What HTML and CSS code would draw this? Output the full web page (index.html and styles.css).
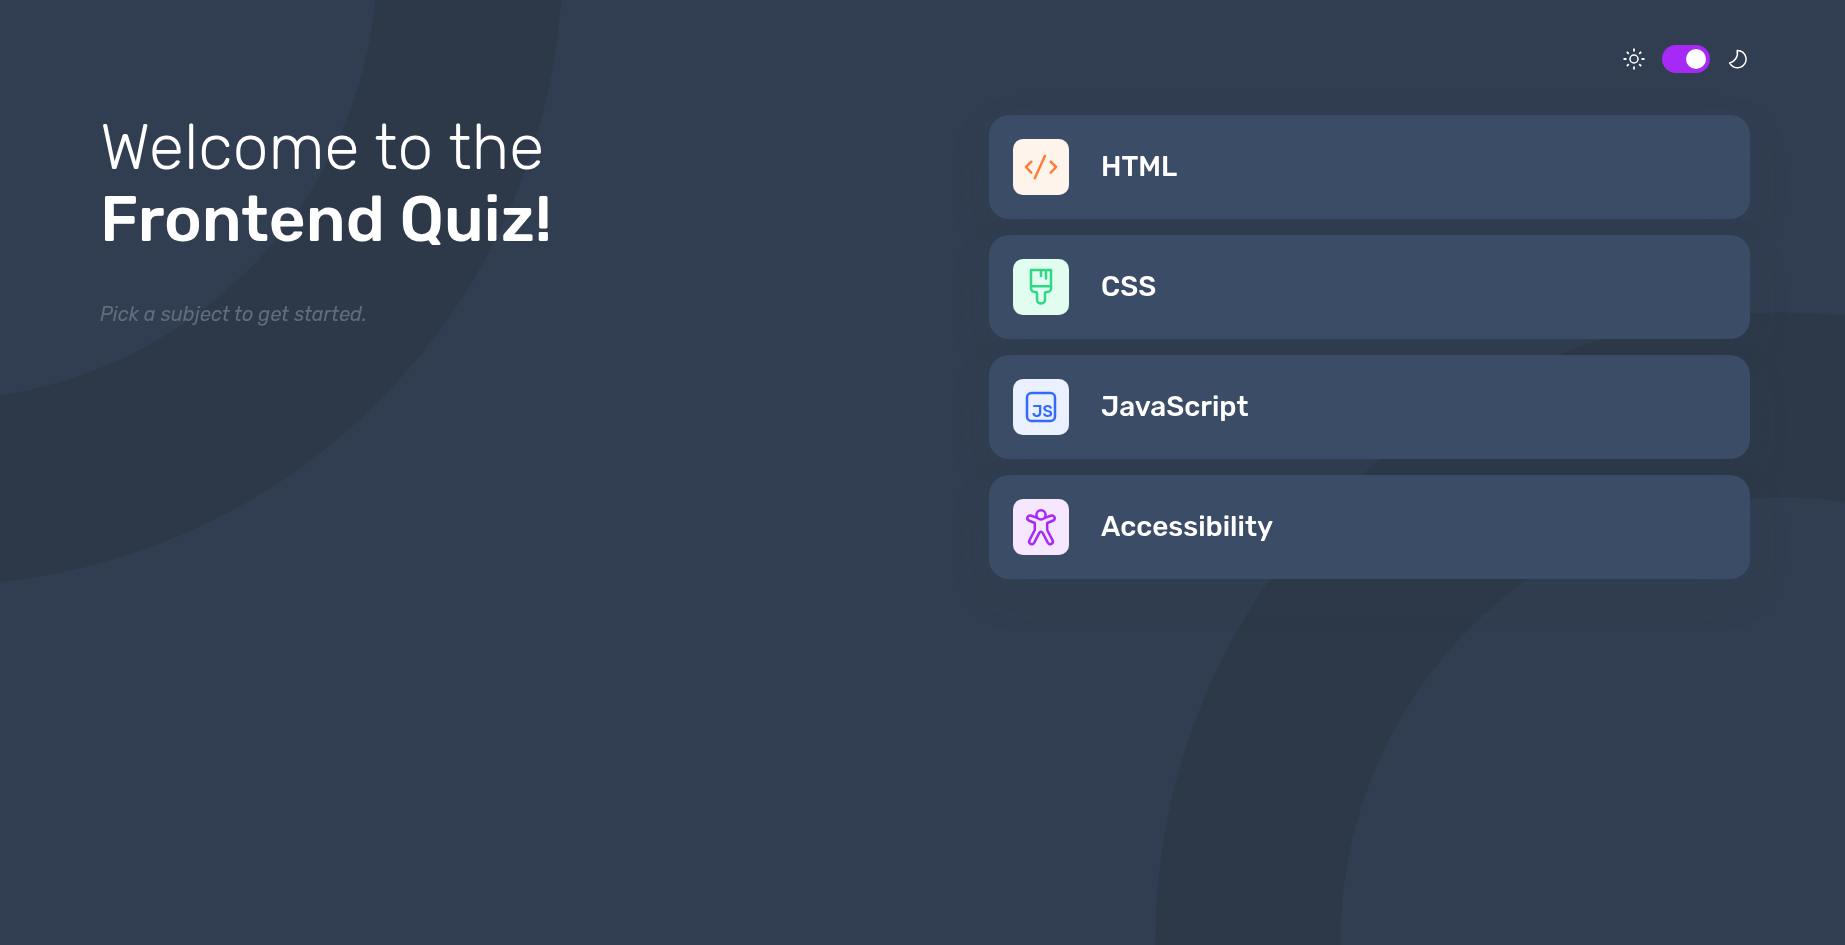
FILE: index.html
```
<!DOCTYPE html>
<html lang="en">
<head>
<meta charset="utf-8">
<meta name="viewport" content="width=device-width, initial-scale=1">
<title>Frontend Quiz</title>
<link rel="stylesheet" href="styles.css">
</head>
<body>
<svg class="backdrop" viewBox="0 0 1845 945" preserveAspectRatio="xMidYMid slice" aria-hidden="true">
  <circle cx="-66" cy="-43" r="536"/>
  <circle cx="1784" cy="941" r="536"/>
</svg>
<div class="page">
  <header class="header">
    <label class="theme">
      <svg class="theme-icon" viewBox="0 0 24 24" aria-hidden="true">
        <circle cx="12" cy="12" r="4"/>
        <path d="M12 1.500v3M12 19.500v3M1.500 12h3M19.500 12h3M4.800 4.800l2 2M17.200 17.200l2 2M4.800 19.200l2-2M17.200 6.800l2-2" stroke-width="1.800"/>
      </svg>
      <input class="switch" type="checkbox" role="switch" aria-label="Dark theme" checked>
      <svg class="theme-icon" viewBox="0 0 24 24" aria-hidden="true">
        <path d="M11.2 3.4A8.7 8.7 0 1 1 3.6 15.9C9 14.6 12.4 9.600 11.2 3.4z"/>
      </svg>
    </label>
  </header>
  <main class="main">
    <section class="intro">
      <h1 class="title">Welcome to the <strong class="title-strong">Frontend Quiz!</strong></h1>
      <p class="hint">Pick a subject to get started.</p>
    </section>
    <section class="subjects" aria-label="Subjects">
      <button class="subject" type="button">
        <svg class="icon icon-html" viewBox="0 0 56 56" aria-hidden="true">
          <path d="M18.300 22.600L12.900 28l5.400 5.600M32 16.800L21.800 39.300M37.700 22.600l5.400 5.400-5.400 5.600"/>
        </svg>
        <span class="subject-name">HTML</span>
      </button>
      <button class="subject" type="button">
        <svg class="icon icon-css" viewBox="0 0 56 56" aria-hidden="true">
          <path d="M18 11h20v18.500a3.500 3.500 0 0 1-3.500 3.500H33.500a1.500 1.500 0 0 0-1.500 1.500V40.500a4 4 0 0 1-8 0V34.500a1.500 1.500 0 0 0-1.500-1.500H21.500A3.500 3.500 0 0 1 18 29.500zM18 27.200h20M28 11v6M33 11v8.500"/>
        </svg>
        <span class="subject-name">CSS</span>
      </button>
      <button class="subject" type="button">
        <svg class="icon icon-js" viewBox="0 0 56 56" aria-hidden="true">
          <rect x="14" y="14" width="28" height="28" rx="4.500"/>
          <text class="icon-text" x="19" y="38">JS</text>
        </svg>
        <span class="subject-name">JavaScript</span>
      </button>
      <button class="subject" type="button">
        <svg class="icon icon-a11y" viewBox="0 0 56 56" aria-hidden="true">
          <circle cx="28" cy="15.800" r="4.600"/>
          <path d="M23.500 18.600L17.600 16.500a2.700 2.700 0 0 0-1.900 5L21.800 24v7L16.500 41.200a2.600 2.600 0 0 0 4.600 2.600L26.400 33.700a1.800 1.800 0 0 1 3.200 0L34.900 43.800a2.600 2.600 0 0 0 4.600-2.600L34.200 31V24l6.100-2.500a2.700 2.700 0 0 0-1.900-5L32.500 18.600"/>
        </svg>
        <span class="subject-name">Accessibility</span>
      </button>
    </section>
  </main>
</div>
</body>
</html>
```
FILE: styles.css
```
* {
  box-sizing: border-box;
}

body {
  margin: 0;
  min-height: 100vh;
  background: #313e51;
  color: #fff;
  font-family: Rubik, Inter, Roboto, sans-serif;
}

.backdrop {
  position: fixed;
  inset: 0;
  z-index: -1;
  width: 100%;
  height: 100%;
}

.backdrop circle {
  fill: none;
  stroke: #2d3949;
  stroke-width: 185;
}

.page {
  padding: 45px 95px 40px 100px;
}

.header {
  display: flex;
  justify-content: flex-end;
  margin-bottom: 42px;
}

.theme {
  display: flex;
  align-items: center;
  gap: 16px;
}

.theme-icon {
  width: 24px;
  height: 24px;
  fill: none;
  stroke: #fff;
  stroke-width: 1.5;
  stroke-linejoin: round;
}

.switch {
  appearance: none;
  display: flex;
  width: 48px;
  height: 28px;
  margin: 0;
  padding: 4px;
  border-radius: 14px;
  background: #a729f5;
  cursor: pointer;
}

.switch::before {
  content: "";
  width: 20px;
  height: 20px;
  border-radius: 50%;
  background: #fff;
}

.switch:checked {
  justify-content: flex-end;
}

.main {
  display: grid;
  grid-template-columns: 1fr 1fr;
  gap: 128px;
}

.title {
  margin: 0 0 48px;
  font-size: 64px;
  font-weight: 300;
  line-height: 64px;
}

.title-strong {
  display: block;
  margin-top: 8px;
  font-weight: 500;
}

.hint {
  margin: 0;
  color: #626c7f;
  font-size: 20px;
  font-style: italic;
  line-height: 30px;
}

.subjects {
  display: flex;
  flex-direction: column;
  gap: 16px;
}

.subject {
  display: flex;
  align-items: center;
  gap: 32px;
  padding: 24px;
  border: 0;
  border-radius: 20px;
  background: #3b4d66;
  box-shadow: 0 16px 40px rgba(49, 62, 81, 0.14);
  color: inherit;
  font: inherit;
  font-size: 28px;
  font-weight: 500;
  line-height: 36px;
  cursor: pointer;
}

.icon {
  width: 56px;
  height: 56px;
  border-radius: 10px;
  fill: none;
  stroke-width: 2.5;
  stroke-linecap: round;
  stroke-linejoin: round;
}

.icon-html {
  background: #fff4ec;
  stroke: #ff7e35;
}

.icon-css {
  background: #e0fdef;
  stroke: #2fd887;
}

.icon-js {
  background: #ebf0ff;
  stroke: #306aff;
}

.icon-text {
  fill: #306aff;
  stroke: none;
  font-size: 16px;
  font-weight: 500;
}

.icon-a11y {
  background: #f6e7ff;
  stroke: #a729f5;
}
```
